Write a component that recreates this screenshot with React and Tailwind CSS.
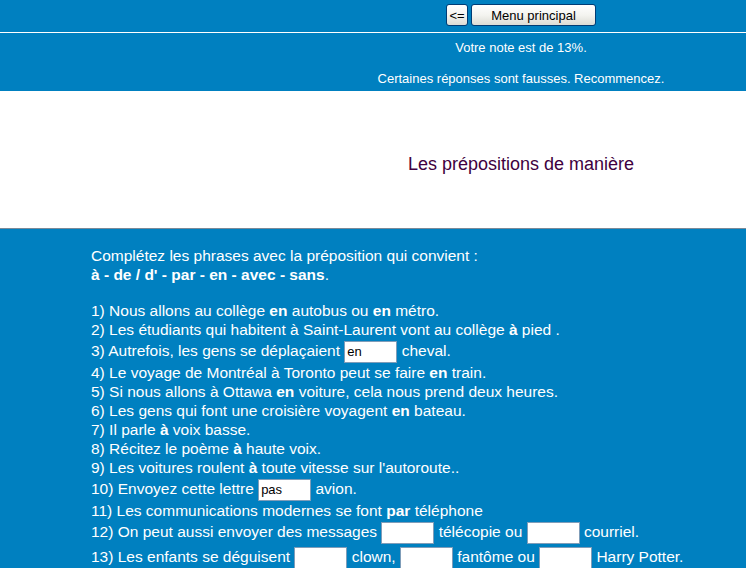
import React from "react";

const F = { fontFamily: '"Liberation Sans", Arial, sans-serif' };

function Blank({ value = "" }) {
  return (
    <input
      type="text"
      defaultValue={value}
      className="inline-block align-middle w-[53px] h-[22px] bg-white border border-[#7f9db9] px-[2px] text-[13px] text-black outline-none"
      style={F}
    />
  );
}

function Line({ children, input }) {
  return (
    <div className={input ? "h-[24px] leading-[24px] whitespace-nowrap" : "h-[19px] leading-[19px] whitespace-nowrap"}>
      {children}
    </div>
  );
}

const B = ({ children }) => <b className="font-bold">{children}</b>;

function XpButton({ children, className }) {
  return (
    <button
      className={
        "h-[22px] rounded-[3px] border border-[#003c74] bg-gradient-to-b from-white via-[#f4f4f0] to-[#dcdcd4] text-[13px] text-black leading-none " +
        className
      }
      style={F}
    >
      {children}
    </button>
  );
}

export default function App() {
  return (
    <div className="w-[746px] h-[568px] overflow-hidden bg-[#0080c0]" style={F}>
      {/* header */}
      <div className="bg-[#0080c0] h-[91px]">
        <div className="h-[32px] pt-[4px]">
          <div className="ml-[296px] w-[450px] flex justify-center gap-[3px]">
            <XpButton className="w-[22px] px-0">&lt;=</XpButton>
            <XpButton className="w-[125px]">Menu principal</XpButton>
          </div>
        </div>
        <div className="h-px bg-white" />
        <div className="ml-[296px] w-[450px] text-center text-white text-[13px] leading-[15px]">
          <div className="pt-[7px]">Votre note est de 13%.</div>
          <div className="pt-[16px]">Certaines réponses sont fausses. Recommencez.</div>
        </div>
      </div>
      {/* title band */}
      <div className="bg-white h-[137px] pt-[63px]">
        <div className="ml-[296px] w-[450px] text-center text-[18px] leading-[20px] text-[#400040]">
          Les prépositions de manière
        </div>
      </div>
      {/* exercise */}
      <div className="border-t border-[#7a8a99] pt-[17px] pl-[91px] text-white text-[15.5px]">
        <Line>Complétez les phrases avec la préposition qui convient :</Line>
        <Line>
          <B>à - de / d' - par - en - avec - sans</B>.
        </Line>
        <div className="h-[17px]" />
        <Line>
          1) Nous allons au collège <B>en</B> autobus ou <B>en</B> métro.
        </Line>
        <Line>
          2) Les étudiants qui habitent à Saint-Laurent vont au collège <B>à</B> pied .
        </Line>
        <Line input>
          3) Autrefois, les gens se déplaçaient <Blank value="en" /> cheval.
        </Line>
        <Line>
          4) Le voyage de Montréal à Toronto peut se faire <B>en</B> train.
        </Line>
        <Line>
          5) Si nous allons à Ottawa <B>en</B> voiture, cela nous prend deux heures.
        </Line>
        <Line>
          6) Les gens qui font une croisière voyagent <B>en</B> bateau.
        </Line>
        <Line>
          7) Il parle <B>à</B> voix basse.
        </Line>
        <Line>
          8) Récitez le poème <B>à</B> haute voix.
        </Line>
        <Line>
          9) Les voitures roulent <B>à</B> toute vitesse sur l'autoroute..
        </Line>
        <Line input>
          10) Envoyez cette lettre <Blank value="pas" /> avion.
        </Line>
        <Line>
          11) Les communications modernes se font <B>par</B> téléphone
        </Line>
        <Line input>
          12) On peut aussi envoyer des messages <Blank /> télécopie ou <Blank /> courriel.
        </Line>
        <div className="h-[25px] leading-[25px] whitespace-nowrap">
          13) Les enfants se déguisent <Blank /> clown, <Blank /> fantôme ou <Blank /> Harry Potter.
        </div>
      </div>
    </div>
  );
}
